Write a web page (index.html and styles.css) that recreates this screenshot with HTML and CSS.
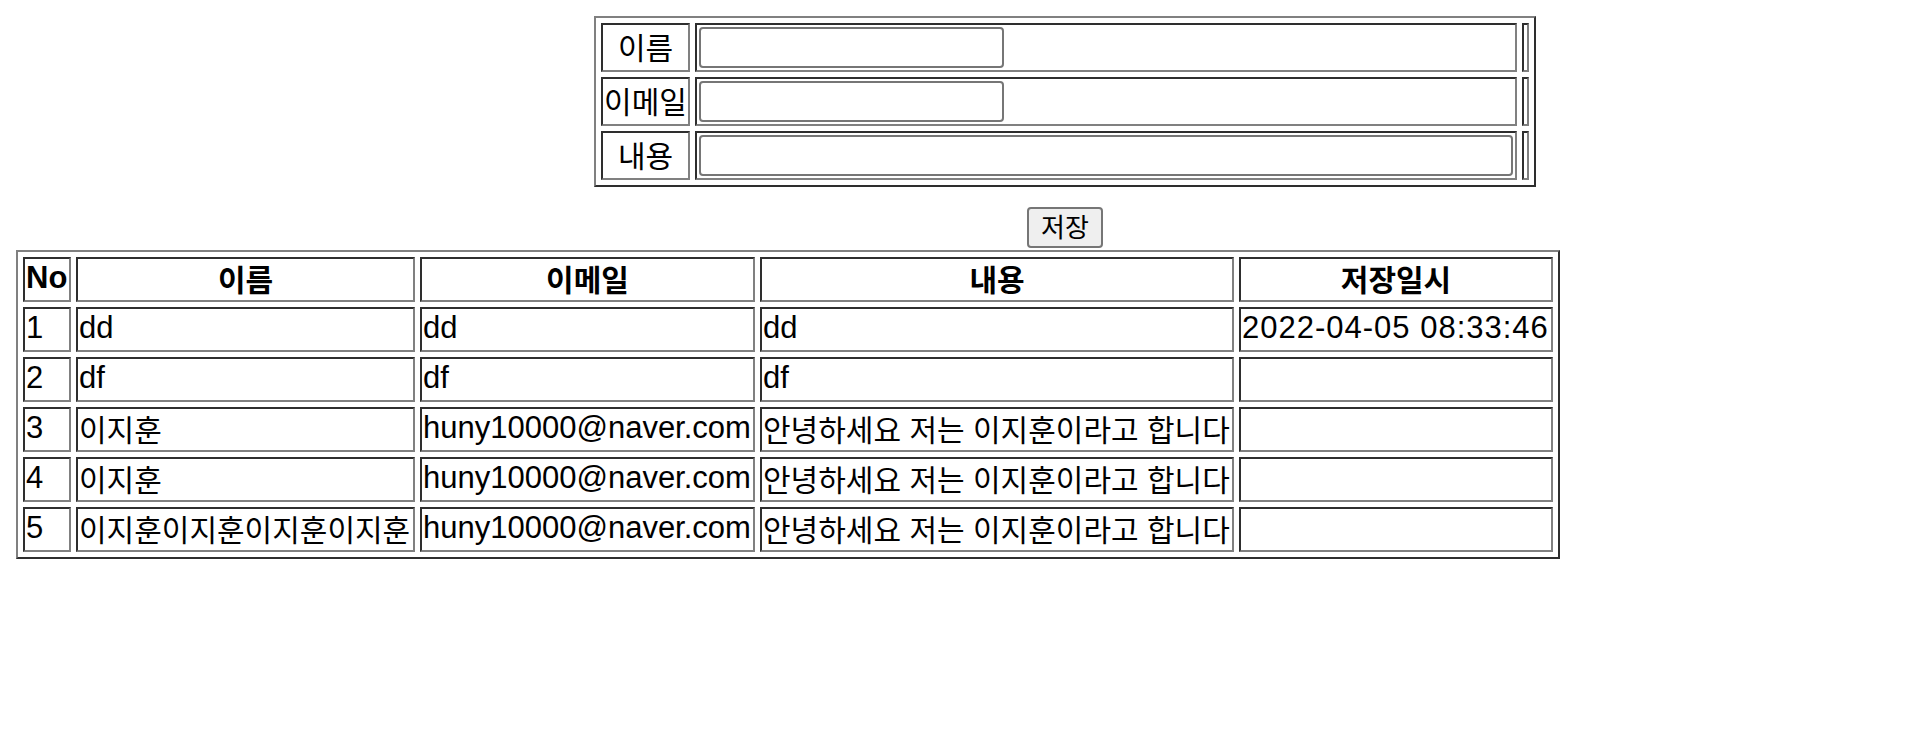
FILE: index.html
```html
<!DOCTYPE html>
<html lang="ko">
<head>
<meta charset="utf-8">
<title>방명록</title>
<link rel="stylesheet" href="styles.css">
</head>
<body>
<form class="entry">
  <table class="grid form-grid">
    <tr>
      <td class="label">이름</td>
      <td class="field"><input class="input input-short" type="text" name="name"></td>
      <td class="stub"></td>
    </tr>
    <tr>
      <td class="label">이메일</td>
      <td class="field"><input class="input input-short" type="text" name="email"></td>
      <td class="stub"></td>
    </tr>
    <tr>
      <td class="label">내용</td>
      <td class="field"><input class="input input-long" type="text" name="content"></td>
      <td class="stub"></td>
    </tr>
  </table>
  <div class="actions"><button class="save" type="button">저장</button></div>
</form>
<table class="grid list">
  <tr>
    <th class="c-no lat">No</th>
    <th class="c-name">이름</th>
    <th class="c-mail">이메일</th>
    <th class="c-text">내용</th>
    <th class="c-date">저장일시</th>
  </tr>
  <tr><td class="lat">1</td><td class="lat">dd</td><td class="lat">dd</td><td class="lat">dd</td><td class="lat date">2022-04-05 08:33:46</td></tr>
  <tr><td class="lat">2</td><td class="lat">df</td><td class="lat">df</td><td class="lat">df</td><td></td></tr>
  <tr><td class="lat">3</td><td>이지훈</td><td class="lat">huny10000@naver.com</td><td>안녕하세요 저는 이지훈이라고 합니다</td><td></td></tr>
  <tr><td class="lat">4</td><td>이지훈</td><td class="lat">huny10000@naver.com</td><td>안녕하세요 저는 이지훈이라고 합니다</td><td></td></tr>
  <tr><td class="lat">5</td><td>이지훈이지훈이지훈이지훈</td><td class="lat">huny10000@naver.com</td><td>안녕하세요 저는 이지훈이라고 합니다</td><td></td></tr>
</table>
</body>
</html>
```
FILE: styles.css
```css
html, body {
  background: #ffffff;
}
body {
  margin: 0;
  padding: 16px 0 0 16px;
  font-family: "Noto Sans CJK KR", sans-serif;
  font-size: 30px;
  color: #000000;
  font-feature-settings: "palt";
}
.entry {
  margin: 0 0 0 578px;
  width: 942px;
}
.grid {
  border-collapse: separate;
  border-spacing: 5px;
  border: 2px solid;
  border-color: #808080 #2e2e2e #2e2e2e #808080;
  table-layout: fixed;
}
.grid td, .grid th {
  border: 2px solid;
  border-color: #2e2e2e #808080 #808080 #2e2e2e;
  box-sizing: border-box;
  white-space: nowrap;
  overflow: hidden;
}
.form-grid {
  width: 942px;
}
.form-grid td {
  padding: 2px;
  height: 49px;
}
.form-grid .label {
  width: 89px;
  text-align: center;
  padding: 0 0 3px;
  line-height: 40px;
}
.form-grid .field {
  width: 822px;
}
.form-grid .stub {
  width: 7px;
  padding: 0;
}
.input {
  display: block;
  box-sizing: border-box;
  height: 41px;
  margin: 0;
  border: 2px solid #767676;
  border-radius: 4px;
  background: #ffffff;
  font: inherit;
  padding: 0 4px;
}
.input-short {
  width: 305px;
}
.input-long {
  width: 100%;
}
.actions {
  display: flex;
  justify-content: center;
  margin: 20px 0 2px;
}
.save {
  box-sizing: border-box;
  width: 76px;
  height: 41px;
  margin: 0;
  padding: 0 0 3px;
  border: 2px solid #767676;
  border-radius: 4px;
  background: #efefef;
  font-family: "Noto Sans CJK KR", sans-serif;
  font-size: 26px;
  line-height: 34px;
  color: #000000;
  font-feature-settings: "palt";
}
.list {
  width: 1544px;
}
.list td, .list th {
  padding: 0 1px 3px;
  height: 45px;
  line-height: 38px;
  text-align: left;
}
.list th {
  text-align: center;
  font-weight: bold;
}
.list .lat {
  font-family: "Liberation Sans", Arial, sans-serif;
  font-size: 31px;
}
.list th.lat {
  text-align: left;
}
.list .date {
  letter-spacing: 1px;
}
.c-no { width: 48px; }
.c-name { width: 339px; }
.c-mail { width: 335px; }
.c-text { width: 474px; }
.c-date { width: 314px; }
```
